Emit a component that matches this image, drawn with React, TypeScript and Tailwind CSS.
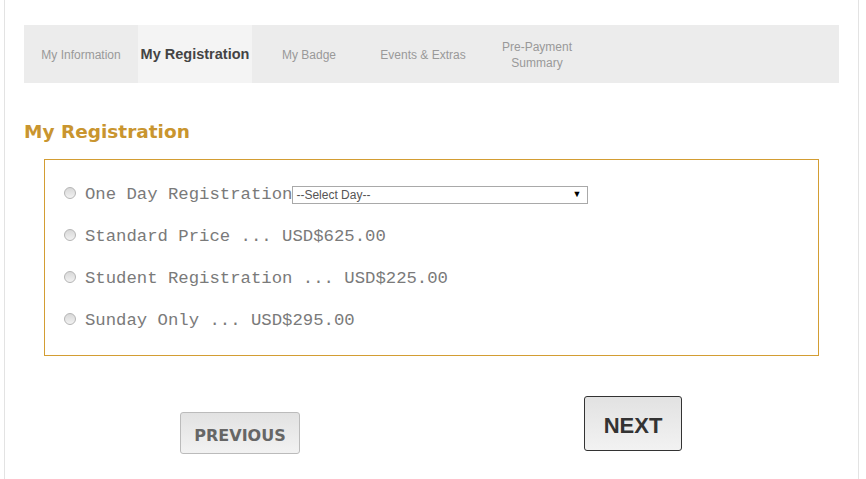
import React from 'react';

const tabs = [
  { label: 'My Information' },
  { label: 'My Registration', active: true },
  { label: 'My Badge' },
  { label: 'Events & Extras' },
  { label: 'Pre-Payment Summary', twoLine: true },
];

const options = [
  { name: 'Standard Price', price: 'USD$625.00' },
  { name: 'Student Registration', price: 'USD$225.00' },
  { name: 'Sunday Only', price: 'USD$295.00' },
];

const Radio: React.FC = () => (
  <span className="self-start mt-[1px] inline-block w-[12px] h-[12px] rounded-full border border-[#b5b5b5] bg-gradient-to-b from-[#d8d8d8] to-[#f2f2f2] shrink-0" />
);

const App: React.FC = () => {
  return (
    <div className="min-h-[479px] bg-white">
      <div className="ml-[4px] w-[855px] min-h-[479px] border-x border-[#e3e3e3] pl-[19px] pt-[25px]">
        {/* Tabs */}
        <div className="w-[815px] h-[58px] bg-[#ececec] flex pt-[1px] font-['Liberation_Sans',Arial,sans-serif]">
          {tabs.map((t) => (
            <div
              key={t.label}
              className={
                t.active
                  ? 'w-[114px] -mt-[1px] pt-[1px] flex items-center justify-center bg-[#f4f4f4] text-[#444] text-[14.5px] font-bold'
                  : 'w-[114px] flex items-center justify-center text-[#999] text-[12px] text-center leading-[16px]'
              }
            >
              {t.twoLine ? (
                <span>
                  Pre-Payment
                  <br />
                  Summary
                </span>
              ) : (
                t.label
              )}
            </div>
          ))}
        </div>

        {/* Heading */}
        <h1 className="mt-[38px] text-[18.5px] leading-[22px] font-bold text-[#c9952f] font-['DejaVu_Sans',Verdana,sans-serif]">
          My Registration
        </h1>

        {/* Options box */}
        <div className="ml-[20px] mt-[16px] w-[775px] h-[197px] border border-[#d39d33] pl-[19px] pt-[26px] font-['Liberation_Mono','Courier_New',monospace] text-[17.3px] text-[#7a7a7a]">
          <div className="flex items-center h-[18px]">
            <Radio />
            <span className="ml-[9px] leading-[18px]">One Day Registration</span>
            <div className="w-[296px] h-[18px] border border-[#a9a9a9] bg-white flex items-center justify-between pl-[3px] pr-[6px] font-['Liberation_Sans',Arial,sans-serif] text-[12px] text-[#555]">
              <span>--Select Day--</span>
              <span className="text-[9px] text-black">▼</span>
            </div>
          </div>
          {options.map((o) => (
            <div key={o.name} className="flex items-center h-[18px] mt-[24px]">
              <Radio />
              <span className="ml-[9px] leading-[18px] whitespace-pre">
                {o.name} ... {o.price}
              </span>
            </div>
          ))}
        </div>

        {/* Buttons */}
        <div className="flex items-start mt-[40px]">
          <button className="ml-[156px] mt-[16px] w-[120px] h-[42px] pt-[5px] rounded-[3px] border border-[#bbbbbb] bg-gradient-to-b from-[#e2e2e2] to-[#f2f2f2] text-[#666] text-[16px] font-bold font-['DejaVu_Sans',Verdana,sans-serif]">
            PREVIOUS
          </button>
          <button className="ml-[284px] w-[98px] h-[55px] pt-[4px] rounded-[3px] border border-[#333] bg-gradient-to-b from-[#e2e2e2] to-[#f2f2f2] text-[#333] text-[22px] font-bold font-['Liberation_Sans',Arial,sans-serif]">
            NEXT
          </button>
        </div>
      </div>
    </div>
  );
};

export default App;
